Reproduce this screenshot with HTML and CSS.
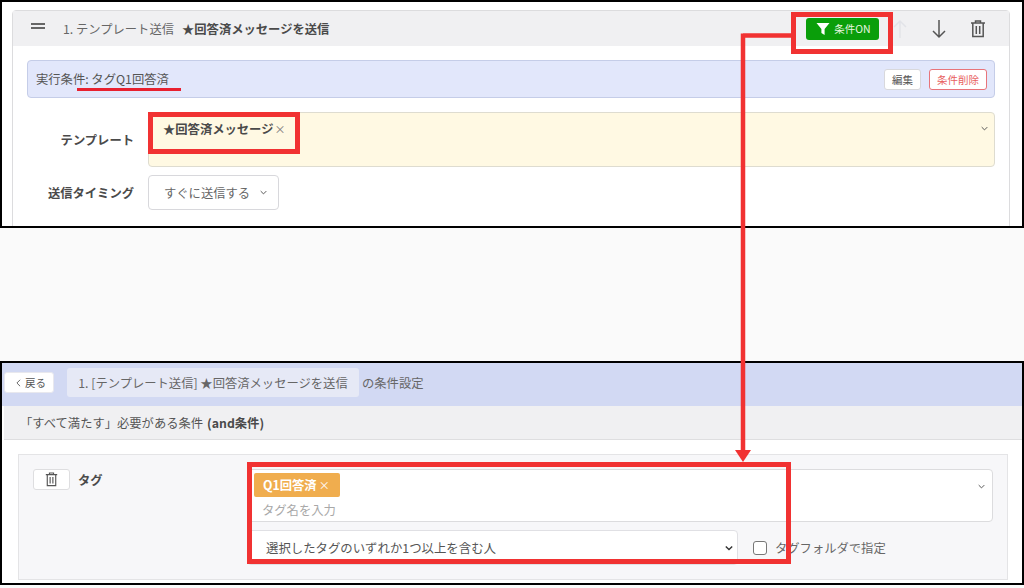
FILE: index.html
```html
<!DOCTYPE html>
<html lang="ja">
<head>
<meta charset="utf-8">
<title>条件設定</title>
<link rel="stylesheet" href="styles.css">
</head>
<body>
<section class="shot shot-top">
  <div class="card">
    <header class="card-head">
      <span class="drag"><i></i><i></i></span>
      <span class="step">1. テンプレート送信</span>
      <strong class="step-name">★回答済メッセージを送信</strong>
      <span class="head-actions">
        <button class="cond-on">
          <svg class="funnel" viewBox="0 0 14 14"><path d="M0.5 1H13.5L8.6 7V13L5.4 11V7Z"/></svg>条件ON
        </button>
        <svg class="act act-up" viewBox="0 0 16 20"><path d="M8 19V2M2 8L8 2L14 8"/></svg>
        <svg class="act act-down" viewBox="0 0 16 20"><path d="M8 1V18M2 12L8 18L14 12"/></svg>
        <svg class="act act-trash" viewBox="0 0 16 18"><path d="M1 3H15M5.500 3V1H10.500V3M2.800 3V16.500H13.200V3M6.300 6V14M9.700 6V14"/></svg>
      </span>
    </header>
    <div class="card-body">
      <div class="cond-bar">
        <span class="cond-text">実行条件: タグQ1回答済</span>
        <span class="cond-btns">
          <button class="mini">編集</button>
          <button class="mini mini-danger">条件削除</button>
        </span>
      </div>
      <div class="row row-template">
        <label class="row-label">テンプレート</label>
        <div class="tpl-field">
          <span class="tpl-value">★回答済メッセージ<span class="tpl-x">×</span></span>
          <svg class="chev tpl-chev" viewBox="0 0 10 6"><path d="M1 1L5 5L9 1"/></svg>
        </div>
      </div>
      <div class="row row-timing">
        <label class="row-label">送信タイミング</label>
        <div class="timing">すぐに送信する<svg class="chev" viewBox="0 0 10 6"><path d="M1 1L5 5L9 1"/></svg></div>
      </div>
    </div>
  </div>
</section>

<section class="shot shot-bottom">
  <div class="blue-bar">
    <button class="back"><svg class="back-ico" viewBox="0 0 6 10"><path d="M5 1L1 5L5 9"/></svg>戻る</button>
    <span class="crumb">1. [テンプレート送信] ★回答済メッセージを送信</span>
    <span class="crumb-after">の条件設定</span>
  </div>
  <div class="and-head">「すべて満たす」必要がある条件 <b>(and条件)</b></div>
  <div class="and-body">
    <div class="cond-box">
      <div class="cond-left">
        <button class="trash-btn"><svg class="trash-ico" viewBox="0 0 16 18"><path d="M1 3H15M5.500 3V1H10.500V3M2.800 3V16.500H13.200V3M6.300 6V14M9.700 6V14"/></svg></button>
        <b class="cond-name">タグ</b>
      </div>
      <div class="cond-right">
        <div class="tag-input">
          <span class="tag">Q1回答済<span class="tag-x">×</span></span>
          <span class="placeholder">タグ名を入力</span>
          <svg class="chev tag-chev" viewBox="0 0 10 6"><path d="M1 1L5 5L9 1"/></svg>
        </div>
        <div class="tag-opts">
          <div class="match-select">選択したタグのいずれか1つ以上を含む人<svg class="chev-dark" viewBox="0 0 10 6"><path d="M1 1L5 5L9 1"/></svg></div>
          <label class="folder-check"><span class="checkbox"></span>タグフォルダで指定</label>
        </div>
      </div>
    </div>
  </div>
</section>

<div class="mark mark-template"></div>
<div class="mark mark-on"></div>
<div class="mark mark-tag"></div>
<div class="underline"></div>
<svg class="connector" viewBox="0 0 58 430"><path class="conn-line" d="M8 2.500H56M8 0.500V418" /><path class="conn-head" d="M0 417H16L8 429Z"/></svg>
</body>
</html>
```
FILE: styles.css
```css
* { box-sizing: border-box; }
html, body { margin: 0; padding: 0; }
body {
  width: 1024px;
  height: 588px;
  overflow: hidden;
  background: #fafafa;
  position: relative;
  font-family: "Noto Sans CJK JP", "Noto Sans", sans-serif;
  font-size: 12.3px;
  color: #555;
}
button { font-family: inherit; cursor: pointer; padding: 0; }

.shot { border: 2px solid #000; background: #fff; overflow: hidden; }
.shot-top { height: 228px; padding: 8px 10px 0; }
.shot-bottom { height: 224px; margin-top: 133px; }

/* top */
.card { border: 1px solid #dcdcde; border-radius: 4px 4px 0 0; height: 240px; margin-right: 2px; }
.card-head {
  height: 35px;
  background: #f0f0f2;
  display: flex;
  align-items: center;
  padding-left: 18px;
}
.drag { display: flex; flex-direction: column; gap: 2px; width: 14px; margin: -6px 18px 0 0; }
.drag i { display: block; height: 2px; background: #666; }
.step { color: #666; }
.step-name { margin-left: 8px; font-weight: 700; color: #4a4a4a; }
.head-actions { margin-left: auto; display: flex; align-items: center; }
.cond-on {
  width: 73px;
  height: 22px;
  margin-right: 13px;
  background: #0a9e0a;
  border: 0;
  border-radius: 3px;
  color: #e8f6e0;
  font-size: 10.500px;
  display: flex;
  align-items: center;
  justify-content: center;
  gap: 4px;
  padding-left: 2px;
}
.funnel { width: 14px; height: 14px; fill: #fff; }
.act { fill: none; stroke-width: 1.500; stroke: #555; }
.act-up { width: 16px; height: 20px; stroke: #e2e3e8; margin-right: 23px; }
.act-down { width: 16px; height: 20px; margin-right: 23px; }
.act-trash { width: 16px; height: 18px; margin-right: 23px; }

.card-body { padding: 14px 14px 0 14px; }
.cond-bar {
  height: 38px;
  background: #e2e7fb;
  border: 1px solid #c5cde8;
  border-radius: 4px;
  display: flex;
  align-items: center;
  padding: 0 7px 0 8px;
}
.cond-text { color: #555; }
.cond-btns { margin-left: auto; display: flex; gap: 8px; }
.mini {
  height: 21px;
  padding: 0 7px;
  background: #fff;
  border: 1px solid #d8d8dc;
  border-radius: 3px;
  font-size: 10.500px;
  color: #555;
}
.mini-danger { border-color: #e8747a; color: #e8615f; }

.row { display: grid; grid-template-columns: 107px 1fr; column-gap: 14px; }
.row-label { font-weight: 700; color: #4a4a4a; text-align: right; }
.row-template { margin-top: 14px; height: 55px; }
.row-template .row-label { padding-top: 19px; }
.tpl-field {
  position: relative;
  background: #fff9e3;
  border: 1px solid #dedcd0;
  border-radius: 4px;
  padding: 7px 14px;
  font-weight: 700;
  color: #4a4a4a;
}
.tpl-x { font-weight: 400; font-size: 11px; color: #777; margin-left: 1px; }
.chev { width: 7px; height: 5px; fill: none; stroke: #555; stroke-width: 1.400; }
.tpl-chev { position: absolute; right: 6px; top: 13px; }
.row-timing { margin-top: 8px; align-items: center; }
.timing {
  width: 131px;
  height: 35px;
  border: 1px solid #d8d8dc;
  border-radius: 4px;
  display: flex;
  align-items: center;
  justify-content: space-between;
  padding: 0 11px 0 15px;
  color: #666;
}

/* bottom */
.blue-bar {
  height: 43px;
  background: #d2d9f3;
  display: flex;
  align-items: center;
  padding: 0 0 4px 2px;
}
.back {
  width: 50px;
  height: 21px;
  background: #fff;
  border: 1px solid #e8e8ee;
  border-radius: 3px;
  font-size: 10.500px;
  color: #555;
  display: flex;
  align-items: center;
  justify-content: center;
  gap: 4px;
  padding-left: 4px;
}
.back-ico { width: 5px; height: 8px; fill: none; stroke: #555; stroke-width: 1.100; }
.crumb {
  margin-left: 13px;
  height: 29px;
  width: 292px;
  background: #e6e9f6;
  border-radius: 3px;
  display: flex;
  align-items: center;
  justify-content: center;
  color: #666;
  white-space: nowrap;
}
.crumb-after { margin-left: 3px; color: #666; }
.and-head {
  height: 34px;
  background: #f0f0f2;
  border-bottom: 1px solid #dedee0;
  display: flex;
  align-items: center;
  gap: 4px;
  padding: 1px 0 0 16px;
  margin-left: 2px;
  color: #555;
}
.and-head b { color: #4a4a4a; }
.and-body { padding: 14px 14px 0 16px; }
.cond-box {
  height: 126px;
  background: #f7f7f9;
  border: 1px solid #e4e4e6;
  display: flex;
  padding: 14px 14px 0 14px;
}
.cond-left { width: 214px; display: flex; align-items: flex-start; gap: 8px; }
.trash-btn {
  width: 37px;
  height: 21px;
  background: #fff;
  border: 1px solid #dedee0;
  border-radius: 3px;
  display: flex;
  align-items: center;
  justify-content: center;
}
.trash-ico { width: 13px; height: 15px; fill: none; stroke: #555; stroke-width: 1.400; }
.cond-name { color: #4a4a4a; line-height: 23px; }
.cond-right { flex: 1; }
.tag-input {
  position: relative;
  height: 53px;
  background: #fff;
  border: 1px solid #dcdcde;
  border-radius: 4px;
  padding: 3px 6px;
  display: flex;
  flex-direction: column;
  align-items: flex-start;
}
.tag {
  flex: none;
  width: 86px;
  height: 24px;
  background: #f0ad4e;
  border-radius: 2px;
  color: #fff;
  font-weight: 700;
  display: flex;
  align-items: center;
  padding-left: 9px;
}
.tag-x { font-weight: 400; font-size: 11px; margin-left: 2px; }
.placeholder { flex: none; color: #a8a8a8; margin: 3px 0 0 8px; line-height: 20px; }
.tag-chev { position: absolute; right: 7px; top: 14px; }
.tag-opts { display: flex; align-items: center; margin-top: 8px; }
.match-select {
  width: 491px;
  height: 35px;
  background: #fff;
  border: 1px solid #e0e0e4;
  border-radius: 4px;
  display: flex;
  align-items: center;
  justify-content: space-between;
  padding: 0 4px 0 18px;
  color: #555;
  font-size: 12.400px;
}
.chev-dark { width: 8px; height: 6px; fill: none; stroke: #333; stroke-width: 1.700; }
.folder-check { display: flex; align-items: center; margin-left: 15px; color: #666; }
.checkbox {
  width: 14px;
  height: 14px;
  background: #fff;
  border: 1px solid #777;
  border-radius: 3px;
  margin-right: 8px;
}

/* annotations lying over the screenshots */
.mark { position: absolute; border: 5px solid #f13232; }
.mark-template { left: 148px; top: 112px; width: 152px; height: 42px; }
.mark-on { left: 791px; top: 12px; width: 102px; height: 42px; }
.mark-tag { left: 247px; top: 462px; width: 544px; height: 102px; }
.underline { position: absolute; left: 77px; top: 88px; width: 104px; height: 3px; background: #e8202f; }
.connector { position: absolute; left: 735px; top: 33px; width: 58px; height: 430px; overflow: visible; }
.conn-line { fill: none; stroke: #f13232; stroke-width: 4.500; }
.conn-head { fill: #f13232; }
```
